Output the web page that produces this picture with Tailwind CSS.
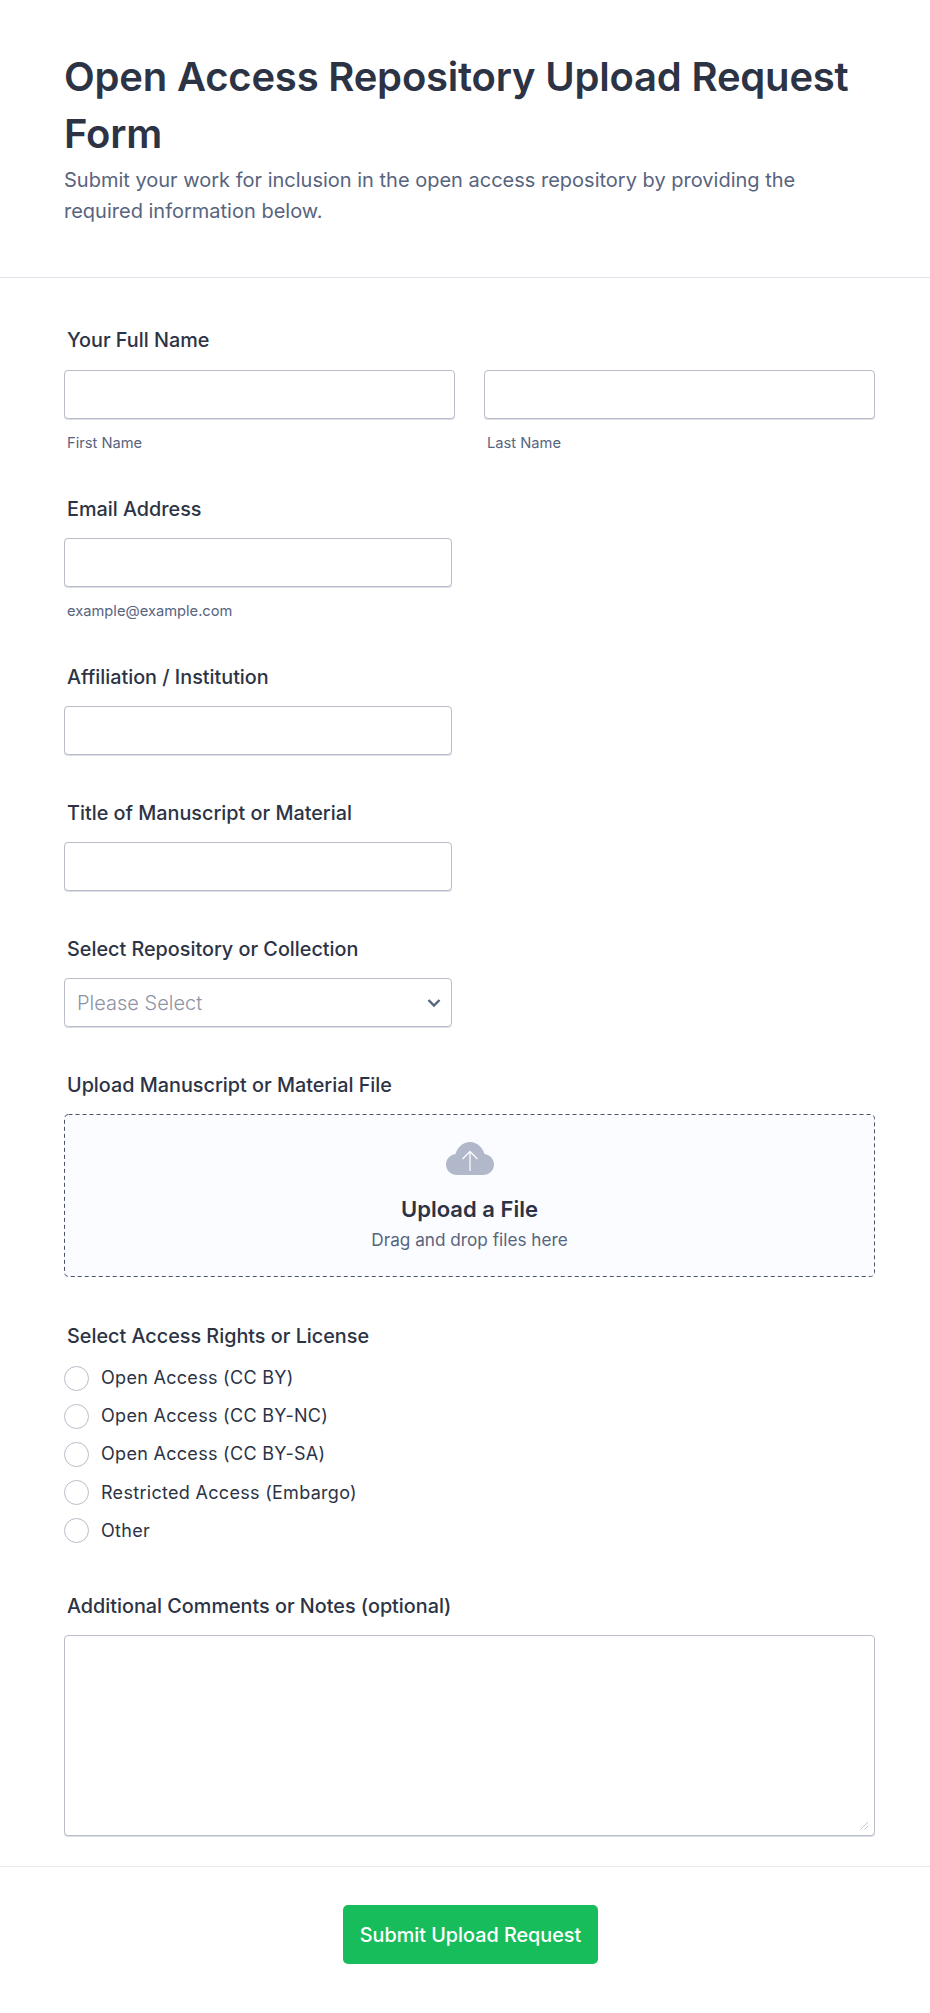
<!DOCTYPE html>
<html lang="en">
<head>
    <meta charset="UTF-8">
    <meta name="viewport" content="width=device-width, initial-scale=1.0">
    <title>Open Access Repository Upload Request Form</title>
    <script src="https://cdn.jsdelivr.net/npm/@tailwindcss/browser@4"></script>
</head>
<body class="bg-white font-[Inter,sans-serif] text-[#2c3345]">

    <!-- header -->
    <header class="h-[278px] border-b border-[#dfe3ec] pl-16 pr-[55px] pt-[48px]">
        <h1 class="text-[40px] leading-[57px] font-semibold tracking-[-0.2px]">Open Access Repository Upload Request Form</h1>
        <p class="mt-[3px] text-[20px] leading-[31px] text-[#57647e] w-[780px]">Submit your work for inclusion in the open access repository by providing the required information below.</p>
    </header>

    <form class="pl-16 pr-[55px] pt-[49px]">
        <!-- name -->
        <div class="h-[132px]">
            <label class="block pl-[3px] text-[19.800px] leading-[27px] font-[450]">Your Full Name</label>
            <div class="mt-[16px] flex gap-[29px]">
                <div class="w-[391px]">
                    <input type="text" class="block w-full h-[49px] bg-white border border-[#b8bdc9] rounded shadow-[0_1px_0_#dcdfe8]">
                    <span class="block mt-[15px] pl-[3px] text-[14.700px] leading-[18px] text-[#57647e]">First Name</span>
                </div>
                <div class="w-[391px]">
                    <input type="text" class="block w-full h-[49px] bg-white border border-[#b8bdc9] rounded shadow-[0_1px_0_#dcdfe8]">
                    <span class="block mt-[15px] pl-[3px] text-[14.700px] leading-[18px] text-[#57647e]">Last Name</span>
                </div>
            </div>
        </div>

        <!-- email -->
        <div class="mt-[37px] h-[131px]">
            <label class="block pl-[3px] text-[19.800px] leading-[27px] font-[450]">Email Address</label>
            <input type="text" class="mt-[15px] block w-[388px] h-[49px] bg-white border border-[#b8bdc9] rounded shadow-[0_1px_0_#dcdfe8]">
            <span class="block mt-[15px] pl-[3px] text-[14.700px] leading-[18px] text-[#57647e]">example@example.com</span>
        </div>

        <!-- affiliation -->
        <div class="mt-[37px]">
            <label class="block pl-[3px] text-[19.800px] leading-[27px] font-[450]">Affiliation / Institution</label>
            <input type="text" class="mt-[15px] block w-[388px] h-[49px] bg-white border border-[#b8bdc9] rounded shadow-[0_1px_0_#dcdfe8]">
        </div>

        <!-- title -->
        <div class="mt-[45px]">
            <label class="block pl-[3px] text-[19.800px] leading-[27px] font-[450]">Title of Manuscript or Material</label>
            <input type="text" class="mt-[15px] block w-[388px] h-[49px] bg-white border border-[#b8bdc9] rounded shadow-[0_1px_0_#dcdfe8]">
        </div>

        <!-- repository -->
        <div class="mt-[45px]">
            <label class="block pl-[3px] text-[19.800px] leading-[27px] font-[450]">Select Repository or Collection</label>
            <div class="mt-[15px] flex items-center justify-between w-[388px] h-[49px] border border-[#b8bdc9] rounded shadow-[0_1px_0_#dcdfe8] pl-3 pr-2.5">
                <span class="text-[20px] font-light text-[#8d94a5]">Please Select</span>
                <svg class="w-[14px] h-[10px]" viewBox="0 0 14 10" fill="none" stroke="#57647e" stroke-width="2.4"><path d="M1.5 2l5.5 5.5L12.500 2"/></svg>
            </div>
        </div>

        <!-- upload -->
        <div class="mt-[45px]">
            <label class="block pl-[3px] text-[19.800px] leading-[27px] font-[450]">Upload Manuscript or Material File</label>
            <div class="relative mt-[15px] h-[163px] flex flex-col items-center bg-[#fbfcff] rounded pt-[28px]">
                <svg class="absolute left-0 top-0 w-[811px] h-[163px]" viewBox="0 0 811 163" fill="none"><rect x="0.5" y="0.5" width="810" height="162" rx="4" stroke="#4a5469" stroke-dasharray="4 3"/></svg>
                <svg class="w-[48px] h-[33px]" viewBox="0 0 48 33">
                    <path fill="#b1b8c9" d="M11 33C5 33 0 28.500 0 22.500C0 17 4 12.800 9.500 12C11.500 5 17 0 24 0C31 0 36.500 5 38.500 12C44 12.800 48 17 48 22.500C48 28.500 43 33 37 33Z"/>
                    <path fill="none" stroke="#fbfcff" stroke-width="1.300" d="M24 29V10M16.500 17L24 9.500L31.500 17"/>
                </svg>
                <div class="mt-[19px] text-[22px] leading-[30px] font-semibold">Upload a File</div>
                <div class="mt-[4px] text-[17.200px] leading-[24px] text-[#57647e]">Drag and drop files here</div>
            </div>
        </div>

        <!-- license -->
        <div class="mt-[46px]">
            <label class="block pl-[3px] text-[19.800px] leading-[27px] font-[450]">Select Access Rights or License</label>
            <div class="mt-[16px] flex flex-col gap-[14.200px]">
                <div class="flex items-center gap-3 h-6"><span class="w-[25px] h-[25px] rounded-full border border-[#b8bdc9] bg-white"></span><span class="text-[18px] leading-6 tracking-[0.3px]">Open Access (CC BY)</span></div>
                <div class="flex items-center gap-3 h-6"><span class="w-[25px] h-[25px] rounded-full border border-[#b8bdc9] bg-white"></span><span class="text-[18px] leading-6 tracking-[0.3px]">Open Access (CC BY-NC)</span></div>
                <div class="flex items-center gap-3 h-6"><span class="w-[25px] h-[25px] rounded-full border border-[#b8bdc9] bg-white"></span><span class="text-[18px] leading-6 tracking-[0.3px]">Open Access (CC BY-SA)</span></div>
                <div class="flex items-center gap-3 h-6"><span class="w-[25px] h-[25px] rounded-full border border-[#b8bdc9] bg-white"></span><span class="text-[18px] leading-6 tracking-[0.3px]">Restricted Access (Embargo)</span></div>
                <div class="flex items-center gap-3 h-6"><span class="w-[25px] h-[25px] rounded-full border border-[#b8bdc9] bg-white"></span><span class="text-[18px] leading-6 tracking-[0.3px]">Other</span></div>
            </div>
        </div>

        <!-- comments -->
        <div class="mt-[50px]">
            <label class="block pl-[3px] text-[19.800px] leading-[27px] font-[450]">Additional Comments or Notes (optional)</label>
            <div class="relative mt-[15px]">
                <textarea class="block w-full h-[201px] bg-white border border-[#b8bdc9] rounded shadow-[0_1px_0_#dcdfe8] resize-none"></textarea>
                <svg class="absolute right-[6px] bottom-[6px] w-[9px] h-[9px]" viewBox="0 0 9 9" fill="none" stroke="#c3c8d4"><path d="M0.5 8.500L8 1M4.500 8.500L8.500 4.500"/></svg>
            </div>
        </div>
    </form>

    <!-- footer -->
    <div class="mt-[30px] border-t border-[#e6e9f0] pl-[11px] pt-[38px] flex justify-center">
        <button type="button" class="w-[255px] h-[59px] pt-[3px] bg-[#18bd5b] rounded-[5px] text-white text-[19.800px] font-[450]">Submit Upload Request</button>
    </div>
</body>
</html>
